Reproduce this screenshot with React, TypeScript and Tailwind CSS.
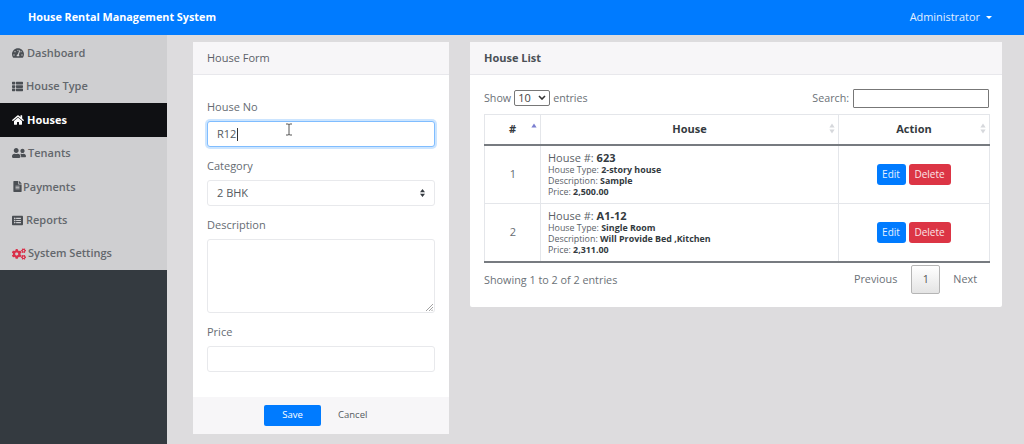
import React from "react";
import { FaTachometerAlt, FaThList, FaHome, FaUserFriends, FaFileAlt, FaListAlt, FaCogs } from "react-icons/fa";

const font = "font-['Open_Sans',sans-serif]";

const items = [
  { label: "Dashboard", Icon: FaTachometerAlt, gap: "gap-[3px]", size: 12 },
  { label: "House Type", Icon: FaThList, gap: "gap-[3px]", size: 11 },
  { label: "Houses", Icon: FaHome, gap: "gap-[3px]", size: 12, active: true },
  { label: "Tenants", Icon: FaUserFriends, gap: "gap-[2px]", size: 14 },
  { label: "Payments", Icon: FaFileAlt, gap: "gap-0", size: 11 },
  { label: "Reports", Icon: FaListAlt, gap: "gap-[3px]", size: 11 },
  { label: "System Settings", Icon: FaCogs, gap: "gap-[2px]", size: 14, red: true },
];

function Sorter({ active }: { active?: boolean }) {
  return (
    <svg width="6" height="11" viewBox="0 0 6 11" className="shrink-0">
      <path d="M3 0.5 L5.6 4.5 L0.4 4.5 Z" fill={active ? "#7b7fd0" : "#d6d8dc"} />
      {!active && <path d="M3 10.5 L5.6 6.5 L0.4 6.5 Z" fill="#d6d8dc" />}
    </svg>
  );
}

function Row({ n, no, type, desc, price, h }: { n: number; no: string; type: string; desc: string; price: string; h: string }) {
  return (
    <tr className={h}>
      <td className="border border-[#e4e6ea] pl-[1px] text-center text-[11px] text-[#666c72]">{n}</td>
      <td className="border border-[#e4e6ea] pl-[7px] align-middle text-[#5b6167]">
        <p className="text-[11px] leading-[12px]">
          House #: <b className="font-bold text-[#333a40]">{no}</b>
        </p>
        <p className="text-[8.9px] leading-[11px]">
          House Type: <b className="font-bold text-[#333a40]">{type}</b>
        </p>
        <p className="text-[8.9px] leading-[11px]">
          Description: <b className="font-bold text-[#333a40]">{desc}</b>
        </p>
        <p className="text-[8.9px] leading-[11px]">
          Price: <b className="font-bold text-[#333a40]">{price}</b>
        </p>
      </td>
      <td className="border border-[#e4e6ea] align-middle">
        <div className="flex justify-center gap-[3px] pr-[1px]">
          <button className="h-[21px] w-[29px] rounded-[3px] bg-[#007bff] text-[10px] text-[#e6f1ff]">Edit</button>
          <button className="h-[21px] w-[42px] rounded-[3px] bg-[#dc3545] text-[10px] text-[#fbe6e8]">Delete</button>
        </div>
      </td>
    </tr>
  );
}

export default function App() {
  const label = "block text-[11px] leading-[14px] text-[#666c73]";
  const control = "block h-[26px] w-full rounded-[3px] border border-[#e8e9ec] bg-white";
  return (
    <div className={`${font} flex h-[444px] w-[1024px] flex-col overflow-hidden bg-[#dddcde]`}>
      <header className="flex h-[35px] shrink-0 items-center justify-between bg-[#007bff] pl-[28px] pr-[32px] text-white">
        <span className="text-[10.8px] font-bold">House Rental Management System</span>
        <span className="flex items-center gap-[6px] text-[10.9px] text-[#e3f0ff]">
          Administrator
          <span className="h-0 w-0 border-x-[3.5px] border-t-[3.5px] border-x-transparent border-t-white" />
        </span>
      </header>
      <div className="flex min-h-0 flex-1">
        <aside className="w-[167px] shrink-0 bg-[#343a40]">
          <nav className="flex flex-col bg-[#cfcfd1] pt-[1.5px]">
            {items.map(({ label: l, Icon, gap, size, active, red }) => (
              <div
                key={l}
                className={`flex h-[33.4px] items-center pl-[12px] text-[11px] ${gap} ${
                  active ? "bg-[#0f1013] font-bold text-white" : "font-semibold text-[#63676c]"
                }`}
              >
                <Icon size={size} className={red ? "text-[#d9304a]" : active ? "text-white" : "text-[#4b4f54]"} />
                <span>{l}</span>
              </div>
            ))}
          </nav>
        </aside>
        <main className="flex min-w-0 flex-1 items-start gap-[21px] pl-[26px] pt-[7px]">
          <section className="flex h-[392px] w-[256px] shrink-0 flex-col rounded-[2px] bg-white">
            <div className="flex h-[33px] shrink-0 items-center border-b border-[#e8e8ec] bg-[#f7f6f8] pl-[14px] text-[11px] text-[#5b6168]">
              House Form
            </div>
            <div className="flex-1 px-[14px] pt-[25px]">
              <label className={label}>House No</label>
              <div className="relative mt-[7px] flex h-[26px] items-center rounded-[3px] border border-[#80bdff] bg-white pl-[9px] text-[11px] text-[#555b61] shadow-[0_0_0_2px_rgba(0,123,255,0.2)]">
                R12
                <span className="ml-[0.5px] h-[13px] w-px bg-[#333]" />
                <svg width="8" height="13" viewBox="0 0 8 13" className="absolute left-[77px] top-[1px]">
                  <path d="M1 1 H3 Q4 1 4 2 V11 Q4 12 3 12 H1 M7 1 H5 Q4 1 4 2 M4 11 Q4 12 5 12 H7" fill="none" stroke="#555" strokeWidth="1" />
                </svg>
              </div>
              <label className={`${label} mt-[12px]`}>Category</label>
              <div className={`${control} mt-[7px] flex items-center justify-between pl-[9px] pr-[9px] text-[11px] text-[#555b61]`}>
                2 BHK
                <svg width="5" height="8" viewBox="0 0 5 8">
                  <path d="M2.5 0 L5 3.2 H0 Z M2.5 8 L5 4.8 H0 Z" fill="#343a40" />
                </svg>
              </div>
              <label className={`${label} mt-[12px]`}>Description</label>
              <div className="relative mt-[7px] h-[74px] rounded-[3px] border border-[#e8e9ec] bg-white">
                <svg width="7" height="7" viewBox="0 0 7 7" className="absolute bottom-[1px] right-[1px]">
                  <path d="M7 0 L0 7 M7 3 L3 7 M7 5.5 L5.5 7" stroke="#8a8a8a" strokeWidth="0.8" />
                </svg>
              </div>
              <label className={`${label} mt-[12px]`}>Price</label>
              <div className={`${control} mt-[7px]`} />
            </div>
            <div className="flex h-[37px] shrink-0 items-center bg-[#f7f6f8] pl-[71px]">
              <button className="h-[21px] w-[57px] rounded-[2px] bg-[#007bff] text-[9.5px] text-white">Save</button>
              <span className="ml-[17px] text-[9.5px] text-[#555b61]">Cancel</span>
            </div>
          </section>
          <section className="flex h-[265px] w-[532px] shrink-0 flex-col rounded-[2px] bg-white">
            <div className="flex h-[33px] shrink-0 items-center border-b border-[#e8e8ec] bg-[#f7f6f8] pl-[14px] text-[11px] font-bold text-[#4a5056]">
              House List
            </div>
            <div className="flex-1 pl-[14px] pr-[13px]">
              <div className="flex h-[39px] items-center justify-between pt-[7px] text-[10.7px] text-[#6b7177]">
                <div className="flex items-center gap-[3px]">
                  <span>Show</span>
                  <span className="flex h-[16px] w-[36px] items-center justify-between rounded-[2px] border border-[#777] px-[3px] text-[11px] text-[#444]">
                    10
                    <svg width="8" height="5" viewBox="0 0 8 5">
                      <path d="M1 1 L4 4 L7 1" fill="none" stroke="#333" strokeWidth="1.6" />
                    </svg>
                  </span>
                  <span>entries</span>
                </div>
                <div className="flex items-center gap-[4px]">
                  <span>Search:</span>
                  <span className="h-[19px] w-[136px] rounded-[1px] border border-[#777]" />
                </div>
              </div>
              <table className="w-[505px] table-fixed border-collapse">
                <colgroup>
                  <col className="w-[56px]" />
                  <col className="w-[298px]" />
                  <col className="w-[151px]" />
                </colgroup>
                <thead>
                  <tr className="h-[30px] border-b-2 border-b-[#777b80]">
                    {[
                      ["#", true],
                      ["House", false],
                      ["Action", false],
                    ].map(([t, a]) => (
                      <th key={t as string} className="border border-[#e4e6ea] border-b-[#777b80] text-center text-[11px] font-bold text-[#343a40]">
                        <div className="relative">
                          {t as string}
                          <span className="absolute right-[3px] top-[2px] flex">
                            <Sorter active={a as boolean} />
                          </span>
                        </div>
                      </th>
                    ))}
                  </tr>
                </thead>
                <tbody>
                  <Row n={1} no="623" type="2-story house" desc="Sample" price="2,500.00" h="h-[59px]" />
                  <Row n={2} no="A1-12" type="Single Room" desc="Will Provide Bed ,Kitchen" price="2,311.00" h="h-[58px] border-b-2 border-b-[#777b80]" />
                </tbody>
              </table>
              <div className="flex items-start justify-between pr-[12px] pt-[2px] text-[10.8px] text-[#6b7177]">
                <span className="pt-[7px]">Showing 1 to 2 of 2 entries</span>
                <div className="flex items-center">
                  <span>Previous</span>
                  <span className="ml-[14px] flex h-[29px] w-[29px] items-center justify-center rounded-[2px] border border-[#b5b5b5] bg-gradient-to-b from-white to-[#e4e4e4] text-[#555]">
                    1
                  </span>
                  <span className="ml-[13px]">Next</span>
                </div>
              </div>
            </div>
          </section>
        </main>
      </div>
    </div>
  );
}
